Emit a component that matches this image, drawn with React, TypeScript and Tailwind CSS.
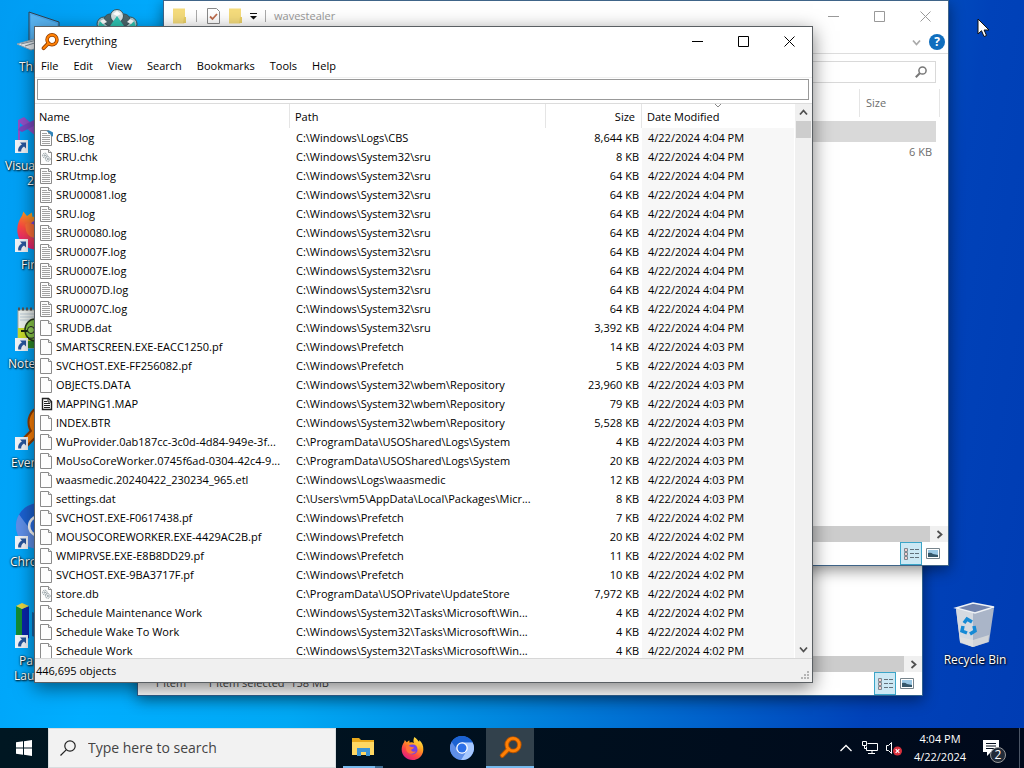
import React from "react";

type Kind = "log" | "cbs" | "gear" | "map" | "blank";
type Row = [string, string, string, string, Kind];

const SRU = "C:\\Windows\\System32\\sru";
const PF = "C:\\Windows\\Prefetch";
const WBEM = "C:\\Windows\\System32\\wbem\\Repository";
const USO = "C:\\ProgramData\\USOShared\\Logs\\System";
const TASKS = "C:\\Windows\\System32\\Tasks\\Microsoft\\Win...";

const rows: Row[] = [
  ["CBS.log", "C:\\Windows\\Logs\\CBS", "8,644 KB", "4:04", "cbs"],
  ["SRU.chk", SRU, "8 KB", "4:04", "gear"],
  ["SRUtmp.log", SRU, "64 KB", "4:04", "log"],
  ["SRU00081.log", SRU, "64 KB", "4:04", "log"],
  ["SRU.log", SRU, "64 KB", "4:04", "log"],
  ["SRU00080.log", SRU, "64 KB", "4:04", "log"],
  ["SRU0007F.log", SRU, "64 KB", "4:04", "log"],
  ["SRU0007E.log", SRU, "64 KB", "4:04", "log"],
  ["SRU0007D.log", SRU, "64 KB", "4:04", "log"],
  ["SRU0007C.log", SRU, "64 KB", "4:04", "log"],
  ["SRUDB.dat", SRU, "3,392 KB", "4:04", "blank"],
  ["SMARTSCREEN.EXE-EACC1250.pf", PF, "14 KB", "4:03", "blank"],
  ["SVCHOST.EXE-FF256082.pf", PF, "5 KB", "4:03", "blank"],
  ["OBJECTS.DATA", WBEM, "23,960 KB", "4:03", "blank"],
  ["MAPPING1.MAP", WBEM, "79 KB", "4:03", "map"],
  ["INDEX.BTR", WBEM, "5,528 KB", "4:03", "blank"],
  ["WuProvider.0ab187cc-3c0d-4d84-949e-3f...", USO, "4 KB", "4:03", "blank"],
  ["MoUsoCoreWorker.0745f6ad-0304-42c4-9...", USO, "20 KB", "4:03", "blank"],
  ["waasmedic.20240422_230234_965.etl", "C:\\Windows\\Logs\\waasmedic", "12 KB", "4:03", "blank"],
  ["settings.dat", "C:\\Users\\vm5\\AppData\\Local\\Packages\\Micr...", "8 KB", "4:03", "blank"],
  ["SVCHOST.EXE-F0617438.pf", PF, "7 KB", "4:02", "blank"],
  ["MOUSOCOREWORKER.EXE-4429AC2B.pf", PF, "20 KB", "4:02", "blank"],
  ["WMIPRVSE.EXE-E8B8DD29.pf", PF, "11 KB", "4:02", "blank"],
  ["SVCHOST.EXE-9BA3717F.pf", PF, "10 KB", "4:02", "blank"],
  ["store.db", "C:\\ProgramData\\USOPrivate\\UpdateStore", "7,972 KB", "4:02", "gear"],
  ["Schedule Maintenance Work", TASKS, "4 KB", "4:02", "blank"],
  ["Schedule Wake To Work", TASKS, "4 KB", "4:02", "blank"],
  ["Schedule Work", TASKS, "4 KB", "4:02", "blank"],
];

function FileIcon({ kind }: { kind: Kind }) {
  if (kind === "map") {
    return (
      <svg width="14" height="16" viewBox="0 0 14 16" className="shrink-0">
        <path d="M2.500 2.500h6l3 3v8h-9z" fill="#fff" stroke="#222" strokeWidth="1.400" />
        <path d="M8 2.500v3.500h3.500M4 5.500h3M4 7.500h6M4 9.500h6M4 11.500h6" fill="none" stroke="#222" />
      </svg>
    );
  }
  return (
    <svg width="14" height="16" viewBox="0 0 14 16" className="shrink-0">
      <path d="M.5.500h8l3 3v12H.500z" fill="#fdfdfd" stroke="#8a8a8a" />
      <path d="M8.500.500v3h3" fill="#eee" stroke="#8a8a8a" />
      {(kind === "log" || kind === "cbs") && (
        <path d="M2 3.500h5M2 5.500h8M2 7.500h8M2 9.500h8M2 11.500h8M2 13.500h8" stroke="#a2a2a2" />
      )}
      {kind === "cbs" && <path d="M6.500 1l3-.500 3.500 2v4l-2-.500-1-2.500z" fill="#3285b9" />}
      {kind === "gear" && (
        <g fill="none" stroke="#8c999f">
          <circle cx="4.800" cy="6.500" r="2.300" strokeDasharray="1.400 .600" />
          <circle cx="4.800" cy="6.500" r=".700" />
          <circle cx="7.800" cy="10" r="2.300" strokeDasharray="1.400 .600" />
          <circle cx="7.800" cy="10" r=".700" />
        </g>
      )}
    </svg>
  );
}

function KeyGlass({ size, dark = true }: { size: number; dark?: boolean }) {
  const edge = dark ? "#8f3c00" : "#b65200";
  return (
    <svg width={size} height={size} viewBox="0 0 18 18">
      <circle cx="11" cy="6.800" r="4.900" fill="none" stroke={edge} strokeWidth="3.600" />
      <path d="M7.500 10.200L2.600 15.200" stroke={edge} strokeWidth="3.800" strokeLinecap="round" />
      <circle cx="11" cy="6.800" r="4.900" fill="none" stroke="#ff8105" strokeWidth="2.100" />
      <path d="M7.500 10.200L2.600 15.200" stroke="#ff8105" strokeWidth="2.200" strokeLinecap="round" />
    </svg>
  );
}

function Firefox({ size }: { size: number }) {
  return (
    <svg width={size} height={size} viewBox="0 0 24 24">
      <defs>
        <linearGradient id="fx" x1=".8" y1="0" x2=".2" y2="1">
          <stop offset="0" stopColor="#fff44f" />
          <stop offset=".35" stopColor="#ffa21f" />
          <stop offset=".65" stopColor="#ff4a42" />
          <stop offset="1" stopColor="#d9168a" />
        </linearGradient>
      </defs>
      <path d="M14 0c3 2 3.500 4 5 5 .2-.6 0-1.200 0-1.800 3 2.500 4.500 6 4.300 10C23 19.500 18 24 12 24S.7 19.500.7 13c0-3 1-5.500 2.600-7.800L4 3l2 2.500 2.600-2L9 6c2-.8 3.500-.4 4.500.3C12.600 4 13 2 14 0z" fill="url(#fx)" />
      <circle cx="12" cy="13" r="5.300" fill="#7542e5" />
      <path d="M5 10c2-1.500 4-.5 5.500.5l3 .3c0 1.500-2 1.800-3 2.400.5 2 3 2.700 5 1.500-1.500 4-8 4-10-1z" fill="#ff7139" />
      <path d="M13 7c3 .5 5 3 4.500 6.500 1.300-1.500 1.500-5-1-7.200z" fill="#ffbd2e" />
    </svg>
  );
}

function Chromium({ size }: { size: number }) {
  return (
    <svg width={size} height={size} viewBox="0 0 24 24">
      <circle cx="12" cy="12" r="12" fill="#3b7be8" />
      <path d="M12 6.500h10.600A12 12 0 0 0 1.600 6L7.200 15z" fill="#1b62d2" />
      <path d="M1.600 6A12 12 0 0 0 11 24l5.500-9.500-9-.500z" fill="#5f8fe8" />
      <path d="M12 6.500h10.600A12 12 0 0 1 11 24l5.700-9.300z" fill="#a6c8ff" />
      <circle cx="12" cy="12" r="5.800" fill="#fff" />
      <circle cx="12" cy="12" r="4.500" fill="#2b70e8" />
    </svg>
  );
}

function ShortcutIcon({ children }: { children: React.ReactNode }) {
  return (
    <div className="relative h-12 w-12">
      {children}
      <svg width="13" height="13" viewBox="0 0 13 13" className="absolute bottom-0.5 -left-px">
        <path d="M0 0h13v13H0z" fill="#f2f4f8" />
        <path d="M5 2.500h6v6L9 6.600C7 8 6 9.500 6.200 11.500H3.200C2.700 8.500 4 6 6.900 4.500z" fill="#27559c" />
      </svg>
    </div>
  );
}

const desktop = [
  {
    lines: ["This PC"], pad: "pl-[19px]", shortcut: false,
    icon: (
      <svg width="48" height="48" viewBox="0 0 48 48">
        <path d="M13 4l30 10v28l-30-9z" fill="#48a4e8" stroke="#2f4252" />
        <path d="M15 6.500l26 9v23l-26-8z" fill="#58b4f2" />
        <path d="M1 36l18-5 14 5-18 6z" fill="#e8edf1" stroke="#8fa2b1" />
        <path d="M5 36l16-4M9 38l16-5" stroke="#7d8c98" />
      </svg>
    ),
  },
  {
    lines: ["Visual Studio", "2022"], pad: "pl-[5px]", second: "pl-[22px]", shortcut: true,
    icon: (
      <svg width="48" height="48" viewBox="0 0 48 48">
        <path d="M2 13l6-3 30 26v8L4 16v20l-2-2z" fill="#9250c8" />
        <path d="M2 23l4 2L40 8v-6L4 20z" fill="#7a48c0" />
      </svg>
    ),
  },
  { lines: ["Firefox"], pad: "pl-[21px]", shortcut: true, icon: <Firefox size={44} /> },
  {
    lines: ["Notepad++"], pad: "pl-[8px]", shortcut: true,
    icon: (
      <svg width="48" height="48" viewBox="0 0 48 48">
        <path d="M2 5h40v38H2z" fill="#eef3f0" stroke="#a6aaa2" />
        <path d="M2 23h40v20H2z" fill="#c9dc2c" />
        <path d="M10 36h32v7H10z" fill="#2f8a28" />
        <path d="M2 4h38" stroke="#555" strokeWidth="3" strokeDasharray="2 2" />
        <path d="M4 9h36M4 12h36M4 15h36" stroke="#bccbd6" />
        <ellipse cx="19" cy="25" rx="10" ry="11" fill="#8bce4a" stroke="#263818" strokeWidth="1.500" />
        <path d="M5 26h24" stroke="#1b2612" strokeWidth="2" />
        <circle cx="15" cy="25" r="3.500" fill="#9ad85c" stroke="#222" />
        <path d="M11 32q5 3 10-1" fill="none" stroke="#222" />
      </svg>
    ),
  },
  { lines: ["Everything"], pad: "pl-[11px]", shortcut: true, icon: <KeyGlass size={48} /> },
  { lines: ["Chromium"], pad: "pl-[10px]", shortcut: true, icon: <Chromium size={46} /> },
  {
    lines: ["Pa", "Lau"], pad: "pl-[19px]", second: "-ml-[5px]", shortcut: true,
    icon: (
      <svg width="48" height="48" viewBox="0 0 48 48">
        <path d="M0 4l6 3v32l-6-3z" fill="#128b35" />
        <path d="M6 7l7-3v32l-7 3z" fill="#0825a8" />
        <path d="M0 4l6-3 7 3-7 3z" fill="#e4d442" />
        <path d="M16 10l8 3v24l-8-3z" fill="#1565a8" />
      </svg>
    ),
  },
];

function DesktopIcons() {
  return (
    <ul className="absolute top-2 left-0 w-20 text-xs leading-[15px] text-white">
      {desktop.map((d) => (
        <li key={d.lines[0]} className="h-[99px]">
          <div className="pl-4">{d.shortcut ? <ShortcutIcon>{d.icon}</ShortcutIcon> : d.icon}</div>
          <div className={`${d.pad} pt-[3px] whitespace-nowrap [text-shadow:1px_1px_2px_#000,0_0_2px_#000]`}>
            {d.lines.map((l, i) => (
              <div key={l} className={i === 1 ? d.second : ""}>{l}</div>
            ))}
          </div>
        </li>
      ))}
    </ul>
  );
}

function Minimize() {
  return <svg width="11" height="11" viewBox="0 0 11 11" stroke="currentColor" fill="none"><path d="M0 5.500h11" /></svg>;
}
function Maximize() {
  return <svg width="11" height="11" viewBox="0 0 11 11" stroke="currentColor" fill="none"><path d="M.5.5h10v10H.5z" /></svg>;
}
function Close() {
  return <svg width="11" height="11" viewBox="0 0 11 11" stroke="currentColor" fill="none"><path d="M.5.500l10 10M10.500.500l-10 10" /></svg>;
}
function WindowButtons() {
  const cls = "flex w-[46px] items-center justify-center self-stretch";
  return (
    <div className="flex self-stretch">
      <button aria-label="Minimize" className={cls}><Minimize /></button>
      <button aria-label="Maximize" className={cls}><Maximize /></button>
      <button aria-label="Close" className={cls}><Close /></button>
    </div>
  );
}

function Chevron({ dir, size = 9 }: { dir: "up" | "down" | "right"; size?: number }) {
  const d = dir === "up" ? "M1 6.500l3.500-4 3.500 4" : dir === "down" ? "M1 2.500l3.500 4 3.500-4" : "M2.500 1l4 3.500-4 3.500";
  return <svg width={size} height={size} viewBox="0 0 9 9" fill="none" stroke="currentColor" strokeWidth="1.800"><path d={d} /></svg>;
}

function Folder() {
  return (
    <svg width="16" height="16" viewBox="0 0 16 16">
      <path d="M1 .5h12v14l-1 1H1z" fill="#f5dc7c" />
      <path d="M12 9h2v6h-3z" fill="#ead067" />
    </svg>
  );
}

function ExplorerFooter({ children }: { children?: React.ReactNode }) {
  return (
    <>
      <div className="flex h-4 bg-[#f0f0f0] text-[#505050]">
        <div className="flex-1 bg-[#cdcdcd]" />
        <button aria-label="Scroll right" className="flex w-[18px] items-center justify-center"><Chevron dir="right" /></button>
      </div>
      <div className="flex h-[23px] items-center bg-white text-[11px] text-[#444]">
        <div className="flex flex-1 pl-4 whitespace-pre">{children}</div>
        <button aria-label="Details view" className="flex h-[23px] w-[22px] items-center justify-center border border-[#3ba5c8] bg-[#cce8f4]">
          <svg width="17" height="14" viewBox="0 0 17 14" fill="none">
            <path d="M1.500 1.500h3v3h-3zM1.500 5.500h3v3h-3zM1.500 9.500h3v3h-3z" fill="#fff" stroke="#7d8890" />
            <path d="M2.500 3h1M2.500 7h1M2.500 11h1" stroke="#d73c3c" />
            <path d="M7 2.500h4M12 2.500h4M7 6.500h4M12 6.500h4M7 10.500h4M12 10.500h4" stroke="#63717b" />
          </svg>
        </button>
        <button aria-label="Large icons" className="flex w-[26px] justify-center pr-1">
          <svg width="14" height="11" viewBox="0 0 14 11">
            <path d="M.5.5h13v10H.5z" fill="#fff" stroke="#77848c" />
            <path d="M2 2h10v7H2z" fill="#9bc8e4" />
            <path d="M2 5q3-1 5 1l5 1v2H2z" fill="#36576a" />
          </svg>
        </button>
      </div>
    </>
  );
}

function ExplorerBack() {
  return (
    <section className="absolute top-[130px] left-[137px] flex h-[566px] w-[786px] flex-col border border-[#30618f] bg-white shadow-[0_4px_14px_rgba(0,0,0,0.45)]">
      <div className="flex-1" />
      <ExplorerFooter>
        <span className="w-[53px]">1 item</span>
        <span>1 item selected  158 MB</span>
      </ExplorerFooter>
    </section>
  );
}

function ExplorerFront() {
  return (
    <section className="absolute top-0 left-[163px] flex h-[566px] w-[786px] flex-col border border-[#3f6488] bg-white text-[11px] text-[#6d6d6d] shadow-[0_4px_14px_rgba(0,0,0,0.45)]">
      <header className="flex h-[30px] items-center text-[#999]">
        <div className="flex flex-1 items-center pl-2">
          <Folder />
          <span className="ml-2 h-3 w-px bg-[#aaa]" />
          <svg width="13" height="16" viewBox="0 0 13 16" className="ml-2.5">
            <path d="M.5.500h9l3 3v12H.500z" fill="#fff" stroke="#8a8a8a" />
            <path d="M3 8.500l2.500 2.500 4.500-5" fill="none" stroke="#bd6c4d" strokeWidth="1.800" />
          </svg>
          <span className="ml-2"><Folder /></span>
          <svg width="7" height="7" viewBox="0 0 7 7" className="ml-1.5"><path d="M0 0h7v1H0zM0 3h7L3.500 6.500z" fill="#111" /></svg>
          <span className="mr-2 ml-2 h-3 w-px bg-[#aaa]" />
          <h2>wavestealer</h2>
        </div>
        <WindowButtons />
      </header>
      <div className="flex h-[23px] items-center justify-end gap-2 border-b border-[#ddd] pr-[3px] text-[#aaa]">
        <Chevron dir="down" />
        <button aria-label="Help" className="flex h-4 w-4 items-center justify-center rounded-full bg-[#106ebe] text-xs font-bold text-white">?</button>
      </div>
      <div className="flex justify-end pt-[7px] pr-3">
        <div className="flex h-[22px] w-[200px] items-center border border-[#d9d9d9] pr-2">
          <input aria-label="Search wavestealer" className="min-w-0 flex-1 outline-none" />
          <svg width="12" height="12" viewBox="0 0 12 12" fill="none" stroke="#777"><circle cx="7.500" cy="4.500" r="3.600" strokeWidth="1.500" /><path d="M4.800 7.200L.8 11.200" strokeWidth="2" /></svg>
        </div>
      </div>
      <div className="mt-1.5 mr-2 flex h-[28px] justify-end">
        <div className="flex w-[81px] items-center border-x border-[#e5e5e5] pl-1.5">Size</div>
      </div>
      <div className="mt-1 mr-3 h-[21px] bg-[#d9d9d9]" />
      <div className="mr-4 flex h-[21px] items-center justify-end">6 KB</div>
      <div className="flex-1" />
      <ExplorerFooter />
    </section>
  );
}

function EverythingWindow() {
  return (
    <main className="absolute top-[26px] left-[34px] flex h-[657px] w-[779px] flex-col border border-[#5a5f63] bg-white text-[11px] text-black shadow-[0_5px_18px_rgba(0,0,0,0.5)]">
      <header className="flex h-[29px] items-center">
        <div className="flex flex-1 items-center gap-1 pl-1.5">
          <KeyGlass size={18} />
          <h1>Everything</h1>
        </div>
        <WindowButtons />
      </header>
      <nav className="flex h-[22px] items-center gap-[15px] border-b border-[#f0f0f0] pl-1.5">
        {["File", "Edit", "View", "Search", "Bookmarks", "Tools", "Help"].map((m) => (
          <button key={m}>{m}</button>
        ))}
      </nav>
      <div className="border-b border-[#dcdcdc] pt-px pr-[3px] pb-[3px] pl-0.5">
        <input aria-label="Search files" className="block h-[21px] w-full border border-[#999] px-1 outline-none" />
      </div>
      <div className="flex min-h-0 flex-1">
        <div className="min-w-0 flex-1 overflow-hidden">
          <table className="w-full table-fixed border-separate border-spacing-0 text-left leading-[19px]">
            <colgroup>
              <col className="w-[255px]" />
              <col className="w-[256px]" />
              <col className="w-24" />
              <col />
            </colgroup>
            <thead>
              <tr className="h-6">
                <th className="border-r border-[#e5e5e5] p-0 pl-1 font-normal">Name</th>
                <th className="border-r border-[#e5e5e5] p-0 pl-[5px] font-normal">Path</th>
                <th className="border-r border-[#e5e5e5] p-0 pr-1.5 text-right font-normal">Size</th>
                <th className="relative p-0 pl-[5px] font-normal">
                  Date Modified
                  <span className="absolute top-0 left-1/2 -translate-x-1/2 text-[#888]">
                    <svg width="7" height="4" viewBox="0 0 7 4" fill="none" stroke="currentColor"><path d="M.5 0l3 3 3-3" /></svg>
                  </span>
                </th>
              </tr>
            </thead>
            <tbody>
              {rows.map(([name, path, size, time, kind]) => (
                <tr key={name} className="h-[19px] whitespace-nowrap">
                  <td className="p-0">
                    <div className="flex items-center gap-0.5 pl-[5px]">
                      <FileIcon kind={kind} />
                      <span>{name}</span>
                    </div>
                  </td>
                  <td className="p-0 pl-1.5">{path}</td>
                  <td className="p-0 pr-[3px] text-right">{size}</td>
                  <td className="bg-[#f7f7f7] p-0 pl-1.5">4/22/2024 {time} PM</td>
                </tr>
              ))}
            </tbody>
          </table>
        </div>
        <div className="flex w-[18px] flex-col items-center border-l border-white bg-[#f0f0f0] text-[#505050]">
          <button aria-label="Scroll up" className="flex h-[17px] items-center"><Chevron dir="up" /></button>
          <div className="h-[17px] w-[15px] bg-[#cdcdcd]" />
          <div className="flex-1" />
          <button aria-label="Scroll down" className="flex h-[17px] items-center"><Chevron dir="down" /></button>
        </div>
      </div>
      <footer className="flex h-6 items-center justify-between border-t border-[#d7d7d7] bg-[#f0f0f0] pt-0.5 pl-px">
        <span>446,695 objects</span>
        <svg width="12" height="12" viewBox="0 0 12 12" className="self-end" fill="#b5b5b5">
          <path d="M7 1h2v2H7zM7 4h2v2H7zM4 4h2v2H4zM7 7h2v2H7zM4 7h2v2H4zM1 7h2v2H1z" />
        </svg>
      </footer>
    </main>
  );
}

function Taskbar() {
  return (
    <footer className="relative flex h-10 bg-linear-to-r from-[#001722] to-[#00091b] text-white">
      <button aria-label="Start" className="flex w-12 items-center justify-center">
        <svg width="16" height="16" viewBox="0 0 16 16" fill="#fff"><path d="M0 2.300l7-1v6.200H0zM8 1.200L16 0v7.500H8zM0 8.500h7v6.200l-7-1zM8 8.500h8V16l-8-1.200z" /></svg>
      </button>
      <label className="flex w-72 items-center gap-3 border border-[#d8dddf] bg-[#f2f2f2] pl-[11px]">
        <svg width="16" height="16" viewBox="0 0 16 16" fill="none" stroke="#222" strokeWidth="1.200"><circle cx="10" cy="6" r="5.200" /><path d="M6.200 9.800L.5 15.500" /></svg>
        <input aria-label="Type here to search" placeholder="Type here to search" className="min-w-0 flex-1 text-sm outline-none placeholder:text-[#444]" />
      </label>
      <div className="flex pl-[3px]">
        <button aria-label="File Explorer" className="flex w-12 flex-col items-center">
          <span className="flex flex-1 items-center">
            <svg width="22" height="20" viewBox="0 0 22 20">
              <path d="M0 1h7l2 2h13v15H0z" fill="#e9a91c" />
              <path d="M0 5h22v13H0z" fill="#ffd863" />
              <path d="M5 11h13v8h-4v-4H9v4H5z" fill="#3c94d5" />
            </svg>
          </span>
          <span className="flex h-0.5 w-10 bg-[#76b9ed]"><i className="ml-auto w-2 bg-[#3e6c91]" /></span>
        </button>
        <button aria-label="Firefox" className="flex w-[50px] items-center justify-center"><Firefox size={23} /></button>
        <button aria-label="Chromium" className="flex w-[49px] items-center justify-center"><Chromium size={24} /></button>
        <button aria-label="Everything" className="flex w-12 items-center justify-center border-b-2 border-[#76b9ed] bg-[#32414c]"><KeyGlass size={23} dark={false} /></button>
      </div>
      <div className="ml-auto flex items-center">
        <button aria-label="Show hidden icons" className="mr-2.5">
          <svg width="12" height="8" viewBox="0 0 12 8" fill="none" stroke="#fff" strokeWidth="1.300"><path d="M.5 7L6 1.500 11.500 7" /></svg>
        </button>
        <svg width="16" height="14" viewBox="0 0 16 14" fill="none" stroke="#fff" className="mr-2">
          <path d="M5.500 2.500h10v7h-11v-4M10 9.500v3M6 12.500h7M.5.500h4v4h-4zM2.500 4.500v3h2" />
        </svg>
        <svg width="16" height="15" viewBox="0 0 16 15" className="mr-2.5">
          <path d="M.5 4.500h2l3-3v11l-3-3h-2z" fill="none" stroke="#fff" />
          <circle cx="11.500" cy="10" r="4.500" fill="#d9303c" />
          <path d="M9.700 8.200l3.600 3.600M13.300 8.200l-3.600 3.600" stroke="#fff" strokeWidth="1.200" />
        </svg>
        <time className="w-14 text-center text-[11px] leading-[18px]">4:04 PM<br />4/22/2024</time>
        <button aria-label="Notifications" className="relative ml-3.5 flex h-10 w-[37px] items-center">
          <svg width="18" height="18" viewBox="0 0 18 18">
            <path d="M1 1h16v12H9l-4 4v-4H1z" fill="#fff" />
            <path d="M4 4.500h10M4 7h10M4 9.500h10" stroke="#06101f" />
          </svg>
          <span className="absolute top-[19px] left-2 flex h-4 w-4 items-center justify-center rounded-full border border-[#999] bg-[#222b38] text-xs">2</span>
        </button>
        <span className="mr-1 h-10 w-px bg-[#4b5565]" />
      </div>
    </footer>
  );
}

export default function App() {
  return (
    <div className="flex min-h-screen flex-col overflow-hidden font-['Open_Sans','Liberation_Sans',sans-serif]">
      <div className="relative min-h-[728px] flex-1 overflow-hidden bg-[linear-gradient(100deg,#009cf2_0%,#00aeff_18%,#00a8f4_36%,#0088df_54%,#0062cb_72%,#0042b9_86%,#003cb3_100%)]">
        <DesktopIcons />
        <svg width="42" height="42" viewBox="0 0 42 42" className="absolute top-[9px] left-24">
          <g stroke="#35525a">
            <circle cx="8" cy="15" r="7" fill="#a8c4c8" />
            <circle cx="34" cy="15" r="7" fill="#a8c4c8" />
            <circle cx="14" cy="11" r="6" fill="#4b666c" />
            <circle cx="28" cy="11" r="6" fill="#4b666c" />
            <circle cx="21" cy="7" r="6.500" fill="#d5e0e2" />
          </g>
          <path d="M21 7l-7 10h14zM4 12l6 6H2zM38 12l-6 6h8z" fill="#2fc4b2" />
          <path d="M17 5l4-3 4 3-4 2zM4 12l4-2 3 3-4 2zM31 13l3-3 4 2-3 3z" fill="#fff" />
        </svg>
        <figure className="absolute top-[601px] right-[9px] flex w-20 flex-col items-center text-xs text-white">
          <svg width="48" height="48" viewBox="0 0 48 48">
            <path d="M5 8l34-1-5 34-12 5-13-5z" fill="#bdc5d2" />
            <path d="M5 8l17 4v34l-13-5z" fill="#d5dae1" />
            <path d="M22 12l21-5-5 34-16 5z" fill="#aab5c8" />
            <path d="M5 7l17-5 21 4-19 6z" fill="#7183ad" stroke="#eef1f5" strokeWidth="1.500" />
            <path d="M9 36l13 3 16-5-1 7-15 5-13-4z" fill="#e2e2e0" opacity=".7" />
            <g fill="none" stroke="#168ad5" strokeWidth="3.500">
              <path d="M13 22l3-4 5 3M23 25l1 5-5 3M16 32l-5-2 1-5" />
            </g>
          </svg>
          <figcaption className="pt-[3px] [text-shadow:1px_1px_2px_#000,0_0_2px_#000]">Recycle Bin</figcaption>
        </figure>
        <ExplorerBack />
        <ExplorerFront />
        <EverythingWindow />
        <svg width="13" height="20" viewBox="0 0 13 20" className="absolute top-[18px] left-[977px]">
          <path d="M1 1v15l3.500-3.300L7 18.500l2.500-1-2.400-5.500H12z" fill="#fff" stroke="#111" />
        </svg>
      </div>
      <Taskbar />
    </div>
  );
}
